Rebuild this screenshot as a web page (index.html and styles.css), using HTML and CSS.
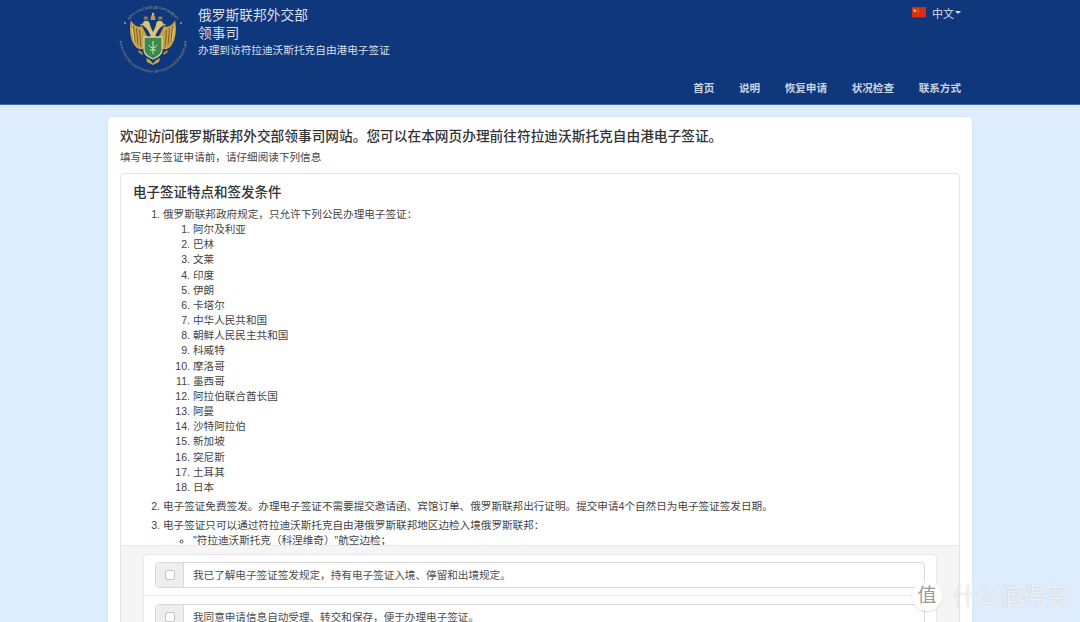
FILE: index.html
```html
<!DOCTYPE html>
<html lang="zh">
<head>
<meta charset="utf-8">
<title>电子签证</title>
<link rel="stylesheet" href="styles.css">
</head>
<body>
<header class="site-header">
  <div class="header-inner">
    <div class="brand">
      <svg class="emblem" viewBox="0 0 70 70" aria-hidden="true">
        <defs>
          <path id="ring-top" d="M4.5 35 A30.5 30.5 0 0 1 65.5 35"/>
          <path id="ring-bottom" d="M1.5 35 A33.5 33.5 0 0 0 68.5 35"/>
        </defs>
        <text class="ring-text"><textPath href="#ring-top" startOffset="50%" text-anchor="middle">КОНСУЛЬСКИЙ ДЕПАРТАМЕНТ</textPath></text>
        <text class="ring-text ring-text-small"><textPath href="#ring-bottom" startOffset="50%" text-anchor="middle">МИНИСТЕРСТВО ИНОСТРАННЫХ ДЕЛ РОССИЙСКОЙ ФЕДЕРАЦИИ</textPath></text>
        <circle cx="7" cy="19" r=".9" fill="#c8a850"/>
        <circle cx="63" cy="19" r=".9" fill="#c8a850"/>
        <!-- wings -->
        <path d="M24 22 C20 24 15 21 13 16 C11 24 12 36 17 42 C20 46 24 46 27 44 L29 32Z" fill="#c8a24a"/>
        <path d="M46 22 C50 24 55 21 57 16 C59 24 58 36 53 42 C50 46 46 46 43 44 L41 32Z" fill="#c8a24a"/>
        <path d="M15.5 22 L17 38 M18.5 24 L20 41 M21.5 26 L23 43 M54.5 22 L53 38 M51.5 24 L50 41 M48.5 26 L47 43" stroke="#80632a" stroke-width="1"/>
        <path d="M14 24 L16 37 M56 24 L54 37" stroke="#f0d98c" stroke-width=".8"/>
        <!-- necks and heads -->
        <path d="M33 33 C31 27 29 25 27 23 C24 22 24 18 27 17 C30 16 32 18 32 21 C33 24 34 26 35 28 C36 26 37 24 38 21 C38 18 40 16 43 17 C46 18 46 22 43 23 C41 25 39 27 37 33Z" fill="#dcc274"/>
        <path d="M24.5 19.5 L21.5 21 L25 21.5Z M45.5 19.5 L48.5 21 L45 21.5Z" fill="#dcc274"/>
        <!-- crowns -->
        <path d="M32.5 16 L33 12 L35 10 L37 12 L37.5 16Z" fill="#b89b50"/>
        <circle cx="35" cy="10" r="1.2" fill="#dcc274"/>
        <path d="M25.5 15.5 L26 12.5 L29.5 12.5 L30 15.5Z M40 15.5 L40.5 12.5 L44 12.5 L44.5 15.5Z" fill="#9e7a38"/>
        <!-- shield -->
        <path d="M26 33 H44 V46 C44 51 39 53 35 55 C31 53 26 51 26 46Z" fill="#3a8a50" stroke="#e1cf92" stroke-width="1.3"/>
        <path d="M35 37 V50 M31 41 C32 43 34 44 35 44 C36 44 38 43 39 41 M32 46 H38" stroke="#d8e4bf" stroke-width="1" fill="none"/>
        <!-- tail and feet -->
        <path d="M28 54 L32 56 L35 59.5 L38 56 L42 54 L41 58 L35 61 L29 58Z" fill="#c8a24a"/>
        <path d="M21 46 L25 49 L24 51 L20 48Z M49 46 L45 49 L46 51 L50 48Z" fill="#a98a3e"/>
      </svg>
      <div class="brand-text">
        <div class="brand-title">俄罗斯联邦外交部</div>
        <div class="brand-title">领事司</div>
        <div class="brand-sub">办理到访符拉迪沃斯托克自由港电子签证</div>
      </div>
    </div>
    <div class="header-right">
      <div class="lang">
        <svg class="flag" viewBox="0 0 15 11" aria-hidden="true">
          <rect width="15" height="11" fill="#de2b14"/>
          <path d="M3 1.6 L3.6 3.2 L5.2 3.3 L3.9 4.3 L4.3 5.9 L3 5 L1.7 5.9 L2.1 4.3 L.8 3.3 L2.4 3.2Z" fill="#fbd40f"/>
          <circle cx="6.4" cy="1.8" r=".5" fill="#fbd40f"/>
          <circle cx="7.2" cy="3.2" r=".5" fill="#fbd40f"/>
          <circle cx="7.2" cy="4.8" r=".5" fill="#fbd40f"/>
          <circle cx="6.4" cy="6.1" r=".5" fill="#fbd40f"/>
        </svg>
        <span>中文</span><span class="caret"></span>
      </div>
      <nav class="main-nav">
        <a>首页</a><a>说明</a><a>恢复申请</a><a>状况检查</a><a>联系方式</a>
      </nav>
    </div>
  </div>
</header>
<main class="card">
  <h1 class="lead">欢迎访问俄罗斯联邦外交部领事司网站。您可以在本网页办理前往符拉迪沃斯托克自由港电子签证。</h1>
  <p class="note">填写电子签证申请前，请仔细阅读下列信息</p>
  <section class="panel">
    <div class="panel-scroll">
      <h2 class="panel-title">电子签证特点和签发条件</h2>
      <ol class="terms">
        <li>俄罗斯联邦政府规定，只允许下列公民办理电子签证：
          <ol class="countries">
            <li>阿尔及利亚</li><li>巴林</li><li>文莱</li><li>印度</li><li>伊朗</li><li>卡塔尔</li>
            <li>中华人民共和国</li><li>朝鲜人民民主共和国</li><li>科威特</li><li>摩洛哥</li><li>墨西哥</li>
            <li>阿拉伯联合酋长国</li><li>阿曼</li><li>沙特阿拉伯</li><li>新加坡</li><li>突尼斯</li><li>土耳其</li><li>日本</li>
          </ol>
        </li>
        <li>电子签证免费签发。办理电子签证不需要提交邀请函、宾馆订单、俄罗斯联邦出行证明。提交申请4个自然日为电子签证签发日期。</li>
        <li>电子签证只可以通过符拉迪沃斯托克自由港俄罗斯联邦地区边检入境俄罗斯联邦：
          <ul class="ports"><li>"符拉迪沃斯托克（科涅维奇）"航空边检；</li></ul>
        </li>
      </ol>
    </div>
    <div class="panel-footer">
      <div class="agree-list">
        <div class="agree-item">
          <label class="agree-group"><span class="addon"><span class="checkbox"></span></span><span class="agree-text">我已了解电子签证签发规定，持有电子签证入境、停留和出境规定。</span></label>
        </div>
        <div class="agree-item">
          <label class="agree-group"><span class="addon"><span class="checkbox"></span></span><span class="agree-text">我同意申请信息自动受理、转交和保存，便于办理电子签证。</span></label>
        </div>
      </div>
    </div>
  </section>
</main>
<div class="watermark">
  <span class="wm-badge">值</span><span class="wm-text">什么值得买</span>
</div>
</body>
</html>
```
FILE: styles.css
```css
* { box-sizing: border-box; }
html, body { margin: 0; height: 622px; overflow: hidden; }
body {
  background: #deedfd;
  font-family: "Liberation Sans", "Noto Sans CJK SC", sans-serif;
  font-size: 11px;
  color: #333;
}
.site-header { height: 105px; background: #0f387c; color: #d9dfe9; border-bottom: 1px solid #3f6aa8; }
.header-inner { width: 864px; margin-left: 108px; display: flex; justify-content: space-between; }
.brand { display: flex; margin-left: 10px; padding-top: 4px; }
.emblem { width: 70px; height: 70px; flex: none; }
.ring-text { font-family: "Liberation Sans", sans-serif; font-size: 3.6px; fill: #a99f7c; }
.ring-text-small { font-size: 3.1px; }
.brand-text { margin-left: 10px; padding-top: 3px; }
.brand-title { font-size: 13.75px; line-height: 18px; }
.brand-sub { font-size: 10.67px; line-height: 15px; }
.header-right { display: flex; flex-direction: column; align-items: flex-end; padding-right: 11px; }
.lang { display: flex; align-items: center; height: 25px; font-size: 11px; }
.flag { width: 14px; height: 10.5px; margin-right: 6px; }
.caret { border: 3px solid transparent; border-top-color: #d9dfe9; border-bottom: 0; margin-left: 1px; }
.main-nav { display: flex; gap: 24.6px; margin-top: 55px; font-size: 10.6px; font-weight: 700; line-height: 16px; color: #ccd3e0; }
.card {
  width: 864px; margin: 12px 0 0 108px; height: 600px; background: #fff;
  border-radius: 4px; padding: 10px 12px; box-shadow: 0 0 2px rgba(0,0,0,.08);
}
.lead { margin: 0; font-size: 13.7px; line-height: 19px; font-weight: 500; color: #333; }
.note { margin: 2px 0 0; font-size: 10.6px; line-height: 18px; color: #444; }
.panel { margin-top: 7px; border: 1px solid #e4e4e4; border-radius: 4px; height: 500px; overflow: hidden; }
.panel-scroll { height: 371px; overflow: hidden; padding: 0 12px; }
.panel-title { margin: 9px 0 5px; font-size: 13.5px; line-height: 19px; font-weight: 500; color: #333; }
.terms { margin: 0; padding-left: 30px; font-size: 10.6px; line-height: 15.15px; color: #444; }
.terms > li { margin-bottom: 4px; }
.countries { margin: 0; padding-left: 30px; }
.ports { margin: 0; padding-left: 30px; list-style: circle; }
.panel-footer { background: #f5f5f5; border-top: 1px solid #e9e9e9; padding: 8px 22px; height: 200px; }
.agree-list { background: #fff; border: 1px solid #e8e8e8; border-radius: 4px; }
.agree-item { padding: 7px 11px; }
.agree-item + .agree-item { border-top: 1px solid #e8e8e8; padding-top: 8px; }
.agree-group { display: flex; height: 26px; border: 1px solid #d8d8d8; border-radius: 4px; }
.addon { width: 28px; background: #eee; border-right: 1px solid #d8d8d8; display: flex; align-items: center; justify-content: center; flex: none; }
.checkbox { width: 10px; height: 10px; background: #fff; border: 1px solid #c4c4c4; border-radius: 2px; }
.agree-text { padding-left: 9px; font-size: 10.6px; line-height: 24px; color: #4d4d4d; }
.watermark { position: absolute; left: 912px; top: 581px; display: flex; align-items: center; }
.wm-badge {
  width: 30px; height: 30px; border-radius: 50%; background: rgba(255,255,255,.92); color: #999;
  font-size: 19px; line-height: 29px; text-align: center; box-shadow: 0 1px 2px rgba(0,0,0,.15);
}
.wm-text { margin-left: 11px; font-size: 23px; line-height: 30px; color: rgba(255,255,255,.8); text-shadow: 0 0 1px rgba(120,120,120,.5); }
```
